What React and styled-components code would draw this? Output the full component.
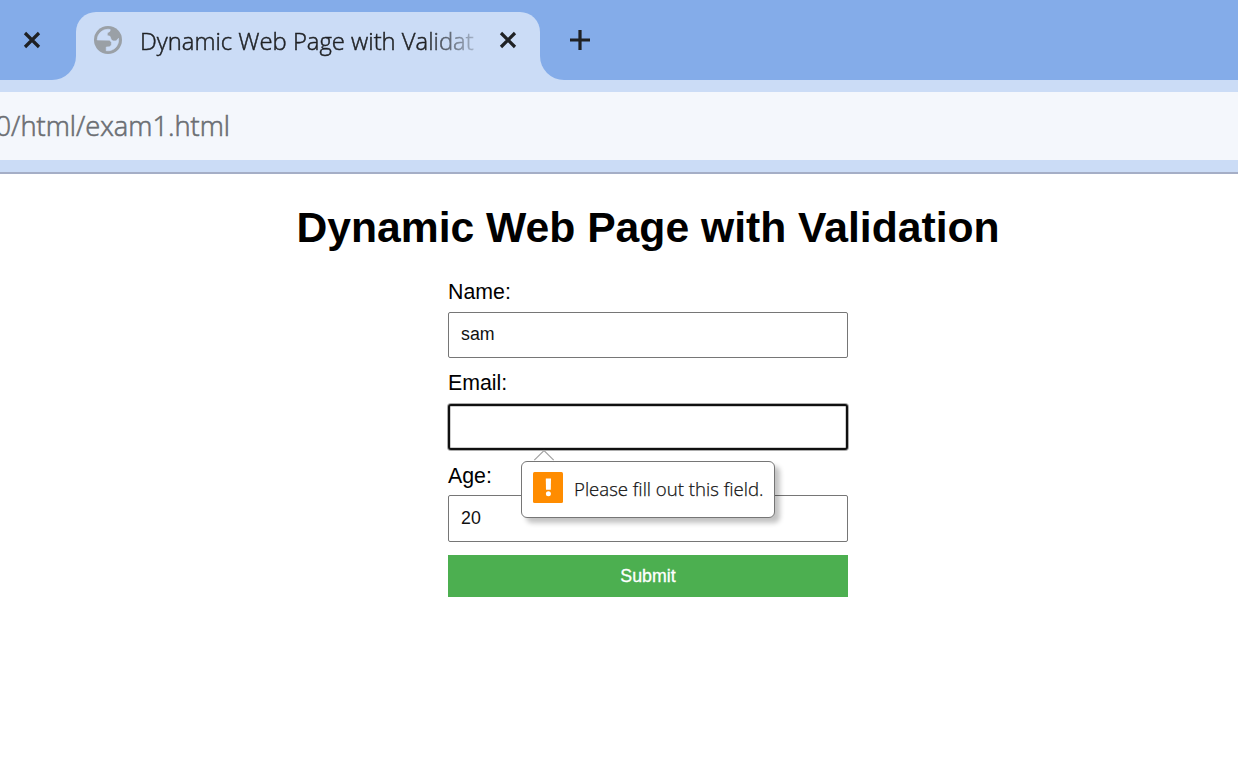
import React from "react";
import styled, { createGlobalStyle } from "styled-components";

const GlobalStyle = createGlobalStyle`
  * { box-sizing: border-box; }
  body { margin: 0; background: #fff; overflow: hidden; }
`;

const uiFont = `"Segoe UI", "Open Sans", "Noto Sans", sans-serif`;
const pageFont = `Arial, "Liberation Sans", sans-serif`;

const Window = styled.div`
  width: 1238px;
  height: 780px;
  overflow: hidden;
  background: #fff;
`;

const TabStrip = styled.div`
  display: flex;
  height: 80px;
  background: #cbdcf6;
`;

const StripBefore = styled.div`
  width: 76px;
  padding: 30px 0 0 22px;
  background: #84ace9;
  border-bottom-right-radius: 24px;
`;

const TabWell = styled.div`
  width: 464px;
  padding-top: 12px;
  background: linear-gradient(#84ace9 40px, #cbdcf6 40px);
`;

const ActiveTab = styled.div`
  display: flex;
  height: 68px;
  padding: 14px 22px 0 18px;
  background: #cbdcf6;
  border-radius: 20px 20px 0 0;
`;

const TabTitle = styled.div`
  width: 334px;
  margin-left: 18px;
  white-space: nowrap;
  font: 300 23.8px/31px ${uiFont};
  color: #1f2124;
  -webkit-text-stroke: 0.5px #1f2124;
  mask-image: linear-gradient(to right, #000 285px, transparent 348px);
`;

const StripAfter = styled.div`
  flex: 1;
  padding: 30px 0 0 30px;
  background: #84ace9;
  border-bottom-left-radius: 24px;
`;

const CloseSlot = styled.div`
  margin: 4px 0 0 24px;
`;

const Toolbar = styled.div`
  height: 94px;
  padding: 12px 0;
  background: #cbdcf6;
  border-bottom: 2px solid #a5aec6;
`;

const AddressBar = styled.div`
  display: flex;
  height: 68px;
  background: #f4f7fc;
`;

const Address = styled.div`
  display: flex;
  justify-content: flex-end;
  width: 230px;
  white-space: nowrap;
  font: 300 27.3px/67px ${uiFont};
  color: #6b6e73;
  -webkit-text-stroke: 0.6px #6b6e73;
`;

const Page = styled.main`
  display: flex;
  flex-direction: column;
  align-items: center;
  padding: 28px 0 0 58px;
  font-family: ${pageFont};
  color: #000;
`;

const Heading = styled.h1`
  margin: 0;
  font-size: 42.67px;
  line-height: 50px;
  white-space: nowrap;
`;

const Form = styled.form`
  display: flex;
  flex-direction: column;
  width: 400px;
  margin-top: 27px;
`;

const Label = styled.label`
  height: 25px;
  margin-bottom: ${(p) => p.$gap}px;
  font-size: 21.33px;
  line-height: 27px;
`;

const Field = styled.div`
  display: flex;
  flex-direction: column;
  position: relative;
  margin-bottom: ${(p) => p.$gap}px;
`;

const Input = styled.input`
  height: ${(p) => p.$height || 46}px;
  padding: 0 12px ${(p) => (p.$height ? 0 : 2)}px;
  border: 1px solid #767676;
  border-radius: 2px;
  outline: none;
  background: #fff;
  color: #111;
  font: 17.78px ${pageFont};
  ${(p) => p.$active && "border: 2px solid #101010; border-radius: 3px; box-shadow: 0 0 0 1px rgba(16,16,16,.35), inset 0 0 0 1px rgba(16,16,16,.2);"}
`;

const Submit = styled.button`
  height: 42px;
  padding: 0;
  border: 0;
  background: #4caf50;
  color: #fff;
  font: 17.78px ${pageFont};
  -webkit-text-stroke: 0.3px #fff;
`;

const Bubble = styled.div`
  position: absolute;
  z-index: 1;
  left: 73px;
  top: 91px;
  display: flex;
  align-items: center;
  width: 254px;
  height: 57px;
  padding: 0 0 4px 11px;
  background: #fff;
  border: 1px solid #767676;
  border-radius: 6px;
  box-shadow: 5px 5px 5px rgba(0, 0, 0, 0.24);
`;

const BubbleArrow = styled.svg`
  position: absolute;
  left: 11px;
  top: -13px;
`;

const BubbleText = styled.span`
  margin-left: 11px;
  padding-top: 3px;
  white-space: nowrap;
  font: 300 18.6px/26px ${uiFont};
  color: #111;
  -webkit-text-stroke: 0.25px #111;
`;

const WarningIcon = styled.svg`
  display: block;
  flex: none;
`;

const Close = () => (
  <svg width="20" height="20" viewBox="0 0 20 20" display="block">
    <path d="M3 3L17 17M17 3L3 17" stroke="#1f2124" strokeWidth="3.2" fill="none" />
  </svg>
);

const Plus = () => (
  <svg width="20" height="20" viewBox="0 0 20 20" display="block">
    <path d="M0 10H20M10 0V20" stroke="#1f2124" strokeWidth="3.2" fill="none" />
  </svg>
);

const Globe = () => (
  <svg width="28" height="28" viewBox="0 0 28 28" display="block">
    <circle cx="14" cy="14" r="14" fill="#9aa0a6" />
    <path
      d="M3.2 14A10.8 10.8 0 0 1 14 3.2L16.2 3.5L16 5.2L13.3 7V9.6L16 10.3L17.3 13.8L19 14.9H22L24.5 12.3A10.8 10.8 0 0 1 12.2 24.7V21.1L15.6 20.8L17.4 19V16.2L15.6 14.2Z"
      fill="#cbdcf6"
      stroke="#cbdcf6"
      strokeWidth="0.6"
      strokeLinejoin="round"
    />
  </svg>
);

const Warning = () => (
  <WarningIcon width="30" height="31" viewBox="0 0 30 31">
    <rect width="30" height="31" rx="1.5" fill="#ff8c00" />
    <path d="M12.8 6.5H18L17.8 17.8H13Z" fill="#fff" />
    <circle cx="15.4" cy="21.8" r="2.5" fill="#fff" />
  </WarningIcon>
);

export default function App() {
  return (
    <Window>
      <GlobalStyle />
      <TabStrip>
        <StripBefore><Close /></StripBefore>
        <TabWell>
          <ActiveTab>
            <Globe />
            <TabTitle>Dynamic Web Page with Validat</TabTitle>
            <CloseSlot><Close /></CloseSlot>
          </ActiveTab>
        </TabWell>
        <StripAfter><Plus /></StripAfter>
      </TabStrip>
      <Toolbar>
        <AddressBar><Address>0/html/exam1.html</Address></AddressBar>
      </Toolbar>
      <Page>
        <Heading>Dynamic Web Page with Validation</Heading>
        <Form noValidate>
          <Field $gap={12}>
            <Label htmlFor="name" $gap={8}>Name:</Label>
            <Input id="name" defaultValue="sam" />
          </Field>
          <Field $gap={13}>
            <Label htmlFor="email" $gap={9}>Email:</Label>
            <Input id="email" type="email" $active />
            <Bubble role="alert">
              <BubbleArrow width="22" height="12" viewBox="0 0 22 12">
                <path d="M1.3 11.2L11 1.5L20.7 11.2" fill="#fff" stroke="#a2a2a2" strokeWidth="1.2" />
              </BubbleArrow>
              <Warning />
              <BubbleText>Please fill out this field.</BubbleText>
            </Bubble>
          </Field>
          <Field $gap={13}>
            <Label htmlFor="age" $gap={7}>Age:</Label>
            <Input id="age" defaultValue="20" $height={47} />
          </Field>
          <Submit type="button">Submit</Submit>
        </Form>
      </Page>
    </Window>
  );
}
